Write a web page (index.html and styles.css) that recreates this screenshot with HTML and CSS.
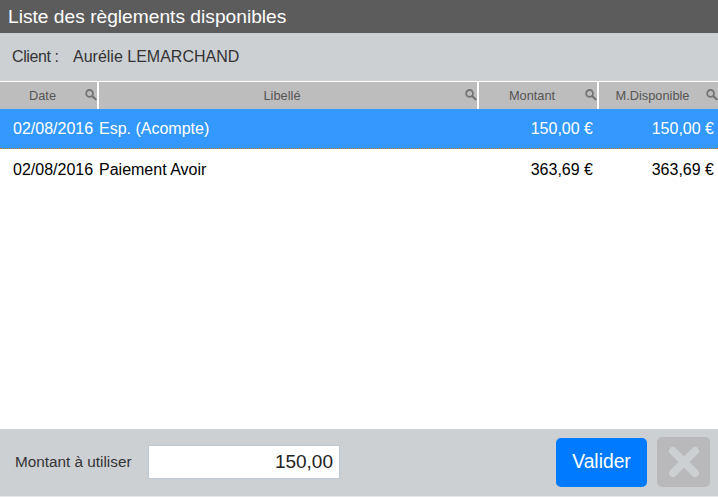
FILE: index.html
```html
<!DOCTYPE html>
<html lang="fr">
<head>
<meta charset="utf-8">
<title>Liste des règlements disponibles</title>
<link rel="stylesheet" href="styles.css">
</head>
<body>
<svg class="defs" width="0" height="0" aria-hidden="true">
  <symbol id="loupe" viewBox="0 0 12 12">
    <circle cx="4.6" cy="4.4" r="3.4" fill="none" stroke="currentColor" stroke-width="1.8"/>
    <path d="M7.4 7.2 L10.6 10.2" fill="none" stroke="currentColor" stroke-width="2.2" stroke-linecap="round"/>
  </symbol>
</svg>
<main class="dialog">
  <h1 class="title">Liste des règlements disponibles</h1>
  <div class="client">
    <span class="client-label">Client :</span>
    <span>Aurélie LEMARCHAND</span>
  </div>
  <div class="grid-head">
    <div class="head-cell">Date<svg class="loupe"><use href="#loupe"/></svg></div>
    <div class="head-cell">Libellé<svg class="loupe"><use href="#loupe"/></svg></div>
    <div class="head-cell">Montant<svg class="loupe"><use href="#loupe"/></svg></div>
    <div class="head-cell">M.Disponible<svg class="loupe"><use href="#loupe"/></svg></div>
  </div>
  <div class="rows">
    <div class="row selected">
      <div class="cell date">02/08/2016</div>
      <div class="cell">Esp. (Acompte)</div>
      <div class="cell amount">150,00 €</div>
      <div class="cell amount">150,00 €</div>
    </div>
    <div class="row">
      <div class="cell date">02/08/2016</div>
      <div class="cell">Paiement Avoir</div>
      <div class="cell amount">363,69 €</div>
      <div class="cell amount">363,69 €</div>
    </div>
  </div>
  <footer class="footer">
    <label class="amount-label" for="montant">Montant à utiliser</label>
    <input class="amount-input" id="montant" type="text" value="150,00">
    <button class="btn-ok" type="button">Valider</button>
    <button class="btn-close" type="button" aria-label="Fermer">
      <svg width="32" height="32" viewBox="0 0 32 32"><path d="M5 5 L27 27 M27 5 L5 27" stroke="#cdd0d3" stroke-width="8" stroke-linecap="round"/></svg>
    </button>
  </footer>
</main>
</body>
</html>
```
FILE: styles.css
```css
* { box-sizing: border-box; }
html, body { margin: 0; height: 100%; }
body { font-family: "Liberation Sans", Arial, sans-serif; background: #fff; overflow: hidden; }
.defs { position: absolute; }
.dialog { width: 718px; height: 497px; display: flex; flex-direction: column; }
.title {
  margin: 0; height: 33px; padding: 0 0 0 8px;
  background: #5c5c5c; color: #fff;
  font-size: 19.2px; font-weight: 400; line-height: 33px;
}
.client {
  height: 48px; padding: 0 0 0 12px;
  display: flex; align-items: center;
  background: #cdd0d3; color: #333; font-size: 16px;
}
.client-label { width: 61px; letter-spacing: -0.4px; }
.grid-head {
  height: 28px; display: grid;
  grid-template-columns: 97px 378px 118px 1fr; column-gap: 2px;
  padding: 1px 0; background: #fff;
}
.head-cell {
  position: relative; background: #bebdbd; color: #555;
  font-size: 12.8px; line-height: 27px; text-align: center; padding-right: 12px;
}
.loupe { position: absolute; top: 7px; right: 0; width: 12px; height: 12px; color: #747474; }
.rows { flex: 1; background: #fff; }
.row {
  height: 41px; display: grid;
  grid-template-columns: 97px 378px 118px 1fr; column-gap: 2px;
  font-size: 16px; line-height: 40px; color: #000;
}
.row.selected { height: 40px; background: #3399ff; color: #fff; border-bottom: 1px dotted #c47a1c; }
.cell { white-space: nowrap; }
.date { padding-left: 13px; }
.amount { text-align: right; padding-right: 4px; }
.row + .row { padding-top: 1px; }
.footer {
  height: 68px; display: flex; align-items: center;
  background: #cdd0d3; border-bottom: 1px solid #e6e8ea;
  padding: 0 8px 1px 15px;
}
.amount-label { font-size: 15.3px; color: #333; width: 133px; }
.amount-input {
  width: 192px; height: 34px; padding: 0 6px 0 0;
  border: 1px solid #bcc8d4; background: #fff; color: #222;
  font: 19px "Liberation Sans", Arial, sans-serif; text-align: right;
}
.btn-ok {
  margin-left: auto; width: 91px; height: 49px; border: 0; border-radius: 5px;
  background: #007bff; color: #fff; font: 19.3px "Liberation Sans", Arial, sans-serif;
}
.btn-close {
  margin-left: 10px; width: 53px; height: 50px; border: 0; border-radius: 5px;
  background: #b9b9bb; padding: 0; display: flex; align-items: center; justify-content: center;
}
```
